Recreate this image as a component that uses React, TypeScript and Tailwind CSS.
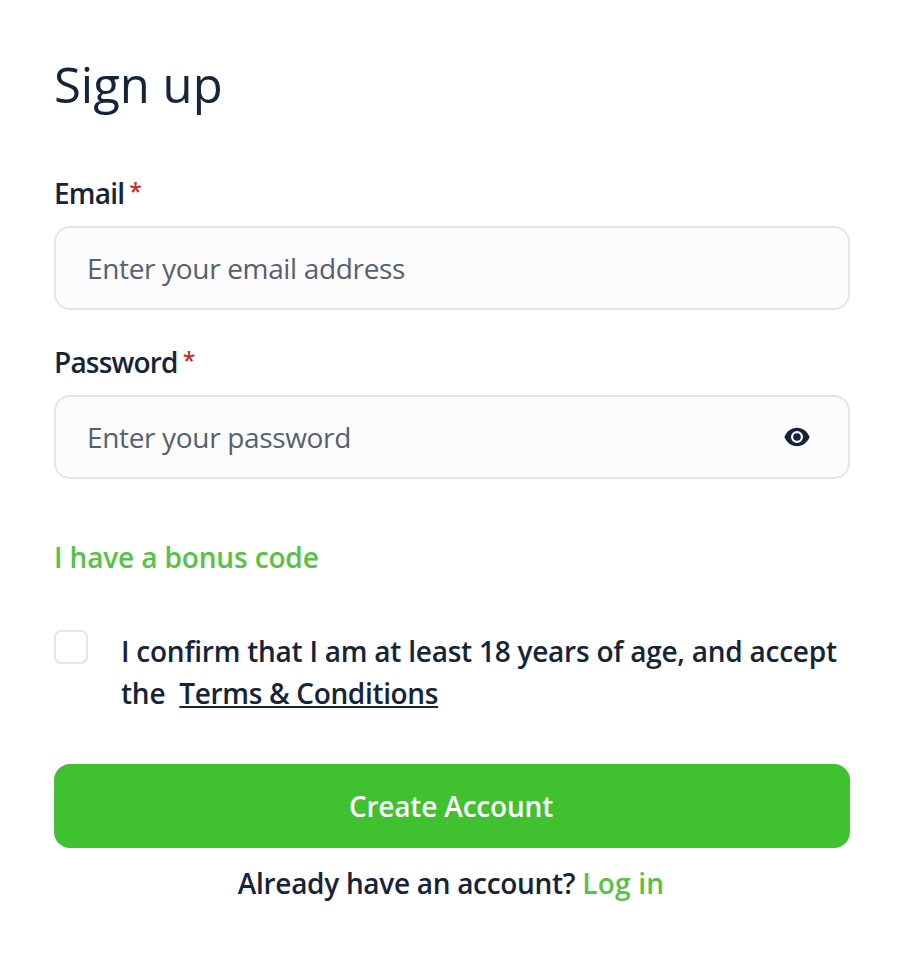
type FieldProps = {
  name: string;
  placeholder: string;
  type: string;
  eye?: boolean;
};

const Field = ({ name, placeholder, type, eye }: FieldProps) => {
  return (
    <div className="flex flex-col">
      <label className="flex h-9 items-center gap-[5px] text-[28px] leading-[34px] font-semibold tracking-[-0.8px]">
        {name}
        <span className="pb-1 text-[23px] font-semibold text-[#c0302c]">*</span>
      </label>
      <div className="mt-[15px] flex h-[84px] items-center rounded-[16px] border-2 border-[#e4e5e8] bg-[#fcfcfc] pr-[38px] pl-[31px]">
        <input
          type={type}
          placeholder={placeholder}
          className="min-w-0 flex-1 bg-transparent text-[28px] tracking-[-0.34px] outline-none placeholder:text-[#566070]"
        />
        {eye && (
          <svg viewBox="0 0 26 20" className="h-5 w-[26px]" fill="#14233a">
            <path
              fillRule="evenodd"
              d="M13 .8C7.300 .8 2.600 4.500 .4 10c2.200 5.500 6.900 9.200 12.600 9.200s10.400-3.700 12.600-9.200C23.400 4.500 18.700 .8 13 .8Zm0 15.200a6 6 0 1 1 0-12 6 6 0 0 1 0 12Zm0-2.200a3.800 3.800 0 1 0 0-7.600 3.800 3.800 0 0 0 0 7.600Z"
            />
          </svg>
        )}
      </div>
    </div>
  );
};

export default function App() {
  return (
    <div className="min-h-[954px] w-full bg-white pt-[54px] pr-[50px] pl-[54px] font-['Open_Sans','Noto_Sans',sans-serif] text-[#16243a]">
      <h1 className="h-[60px] text-[49px] leading-[60px]">Sign up</h1>

      {/* fields */}
      <div className="mt-[61px] flex flex-col gap-[34px]">
        <Field name="Email" type="email" placeholder="Enter your email address" />
        <Field name="Password" type="password" placeholder="Enter your password" eye />
      </div>

      <button className="mt-[58px] block h-10 text-[28px] leading-10 font-semibold tracking-[-0.14px] text-[#55c344]">
        I have a bonus code
      </button>

      {/* terms */}
      <div className="mt-[53px] flex gap-[33px]">
        <span className="size-[34px] shrink-0 rounded-[7px] border-2 border-[#e6e6e8]" />
        <p className="text-[28px] leading-[42px] font-semibold tracking-[-0.24px] whitespace-nowrap">
          I confirm that I am at least 18 years of age, and accept
          <br />
          the&nbsp; <a className="tracking-[-0.34px] underline">Terms &amp; Conditions</a>
        </p>
      </div>

      <button className="mt-[50px] h-[84px] w-full rounded-[16px] bg-[#40c130] pr-0.5 text-[28px] font-semibold tracking-[-0.18px] text-white">
        Create Account
      </button>
      <p className="mt-[15px] pr-0.5 text-center text-[28px] leading-10 font-semibold tracking-[-0.3px]">
        Already have an account? <a className="tracking-[0.2px] text-[#55c344]">Log in</a>
      </p>
    </div>
  );
}
